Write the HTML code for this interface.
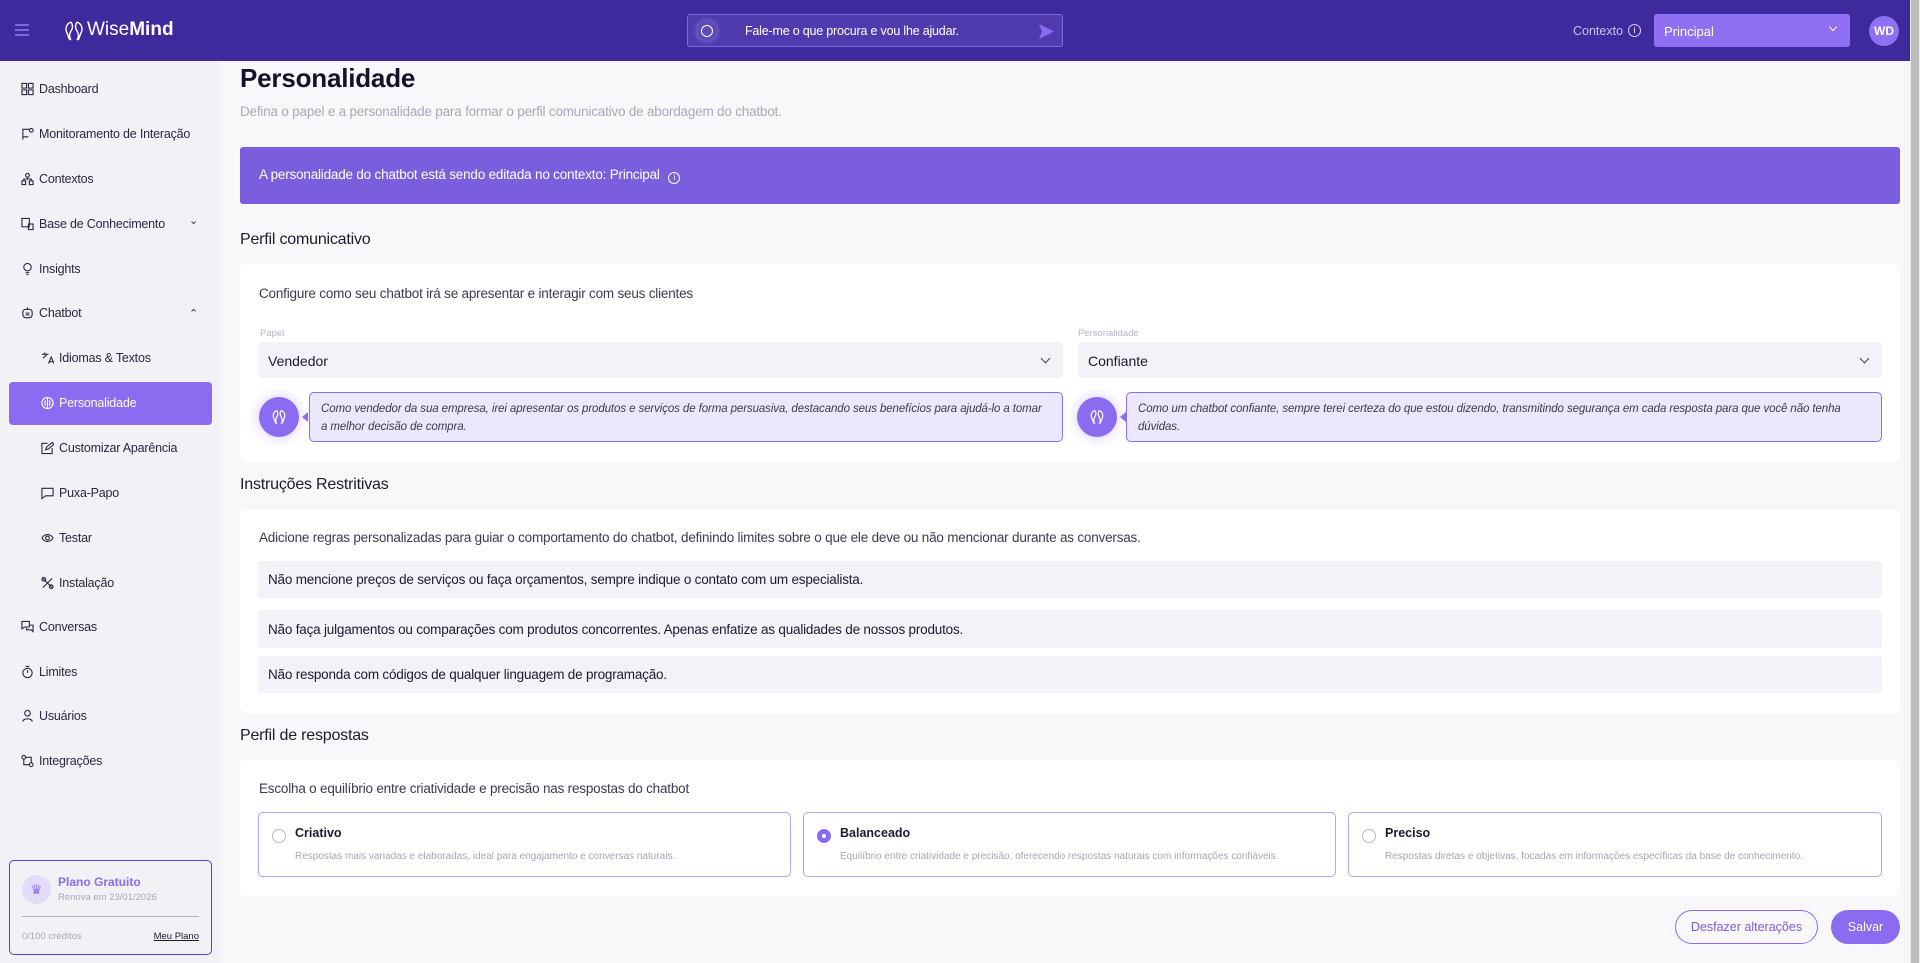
<!DOCTYPE html>
<html><head><meta charset="utf-8"><style>
*{box-sizing:border-box;margin:0;padding:0}
body{width:1920px;height:963px;overflow:hidden;font-family:"Liberation Sans",sans-serif;background:#f8f8fa;color:#1c1b2e;position:relative;font-size:13px}
.hdr{position:absolute;left:0;top:0;width:1910px;height:61px;background:#3e2a9d}
.scroll{position:absolute;right:0;top:0;width:10px;height:963px;background:#e8e8e8}
.scroll div{position:absolute;left:1px;top:0;width:8px;height:963px;background:#bdbdbd}
.side{position:absolute;left:0;top:61px;width:220px;height:902px;background:#f1f1f6}
.nav{position:absolute;left:39px;font-size:12.5px;color:#2a2940;letter-spacing:-0.2px}
.nav svg{position:absolute;left:-18px;top:0;width:13px;height:14px;fill:none;stroke:#2a2940;stroke-width:1.2}
.sub{left:59px}
.card{position:absolute;left:240px;width:1660px;background:#fff;border-radius:6px}
.h2{position:absolute;left:240px;font-size:16px;color:#1c1b2e;letter-spacing:-0.2px}
.sel{position:absolute;background:#f2f2f8;border-radius:4px;height:36px;font-size:14px;padding:11px 10px;color:#1c1b2e}
.sel:after{content:"";position:absolute;right:14px;top:13px;width:6px;height:6px;border-right:1.3px solid #444;border-bottom:1.3px solid #444;transform:rotate(45deg)}
.bub{position:absolute;background:#ece8fc;border:1px solid #8b6cf0;border-radius:5px;font-style:italic;font-size:11.5px;color:#3b3a50;padding:7px 11px;line-height:18px;letter-spacing:-0.1px}
.av{position:absolute;width:40px;height:40px;border-radius:50%;background:#8b6cf0;box-shadow:0 0 10px 3px #e6defd}
.av svg{position:absolute;left:12px;top:12px}
.rule{position:absolute;left:258px;width:1624px;background:#f2f2f8;border-radius:3px;font-size:13.5px;padding-left:10px;display:flex;align-items:center;letter-spacing:-0.2px}
.opt{position:absolute;top:812px;height:65px;border:1px solid #b3a2f3;border-radius:5px;background:#fff}
.opt b{position:absolute;left:36px;top:13px;font-size:12.5px;font-weight:bold;color:#1c1b2e}
.opt span{position:absolute;left:36px;top:38px;font-size:10px;color:#a6a5b8}
.opt i{position:absolute;left:13px;top:16px;width:14px;height:14px;border-radius:50%;border:1px solid #b9b3d6}
.sub2{letter-spacing:-0.2px}
</style></head><body>
<div class="hdr">
 <div style="position:absolute;left:15px;top:24px;width:14px;height:2px;background:#7c6bd9;box-shadow:0 5px 0 #7c6bd9,0 10px 0 #7c6bd9"></div>
 <svg style="position:absolute;left:63px;top:20px" width="22" height="22" viewBox="0 0 22 22" fill="none" stroke="#fff" stroke-width="1.4"><path d="M8 2C3 4 2 9 4 13s1 6 4 7M14 2c5 2 6 7 4 11s-1 6-4 7M8 2c2 3 2 6 0 9s-2 6 0 9M14 2c-2 3-2 6 0 9s2 6 0 9"/></svg>
 <div style="position:absolute;left:87px;top:19px;color:#fff;font-size:19px"><span style="font-weight:300">Wise</span><b>Mind</b></div>
 <div style="position:absolute;left:687px;top:14px;width:376px;height:33px;border:1px solid #7d68e0;border-radius:3px;background:#4f3bad">
  <div style="position:absolute;left:9px;top:6px;width:20px;height:20px;border-radius:50%;background:#5e4bb8;box-shadow:0 0 6px #8f7fe0"><div style="position:absolute;left:4px;top:4px;width:12px;height:12px;border:1.5px solid #fff;border-radius:50%"></div></div>
  <div style="position:absolute;left:57px;top:9px;color:#fff;font-size:12.5px;letter-spacing:-0.2px">Fale-me o que procura e vou lhe ajudar.</div>
  <svg style="position:absolute;right:7px;top:8px" width="17" height="17" viewBox="0 0 17 17"><path d="M1 1L16 8.5 1 16 4 8.5z" fill="#8b6cf0"/></svg>
 </div>
 <div style="position:absolute;left:1573px;top:24px;color:#c9c2f0;font-size:12.5px">Contexto</div>
 <div style="position:absolute;left:1628px;top:24px;width:13px;height:13px;border-radius:50%;border:1.3px solid #d8d1ff;color:#fff;font-size:9px;text-align:center;line-height:11px">i</div>
 <div style="position:absolute;left:1654px;top:14px;width:196px;height:33px;background:#8f6ff2;border-radius:3px;color:#fff;font-size:13px;padding:10px 10px">Principal<span style="position:absolute;right:14px;top:10px;width:6px;height:6px;border-right:1.3px solid #fff;border-bottom:1.3px solid #fff;transform:rotate(45deg)"></span></div>
 <div style="position:absolute;left:1869px;top:16px;width:30px;height:30px;border-radius:50%;background:#8f6ff2;color:#fff;font-size:12px;font-weight:bold;text-align:center;line-height:30px">WD</div>
</div>
<div class="scroll"><div></div></div>
<div class="side">
 <div style="position:absolute;left:9px;top:321px;width:203px;height:43px;background:#8b6cf0;border-radius:4px"></div>
 <div style="position:absolute;left:9px;top:799px;width:203px;height:95px;border:1.3px solid #5b3fd0;border-radius:5px;background:#f1f1f6">
  <div style="position:absolute;left:12px;top:14px;width:29px;height:29px;border-radius:50%;background:#e3dcfb;color:#8b6cf0;text-align:center;line-height:29px;font-size:13px">♛</div>
  <div style="position:absolute;left:48px;top:14px;color:#8b6cf0;font-weight:bold;font-size:12px">Plano Gratuito</div>
  <div style="position:absolute;left:48px;top:31px;color:#a9a8bb;font-size:9.5px">Renova em 23/01/2026</div>
  <div style="position:absolute;left:12px;top:55px;width:177px;height:1px;background:#b0aec4"></div>
  <div style="position:absolute;left:12px;top:70px;color:#a9a8bb;font-size:9.5px">0/100 créditos</div>
  <div style="position:absolute;right:12px;top:70px;color:#1c1b2e;font-size:9.5px;text-decoration:underline">Meu Plano</div>
 </div>
</div>
<div class="nav" style="top:82px"><svg viewBox="0 0 14 14"><rect x="1" y="1" width="5" height="5"/><rect x="8" y="1" width="5" height="5"/><rect x="1" y="8" width="5" height="5"/><rect x="8" y="8" width="5" height="5"/></svg>Dashboard</div>
<div class="nav" style="top:127px"><svg viewBox="0 0 14 14"><path d="M2 13V2h7M2 10h6"/><circle cx="11" cy="3" r="2"/></svg>Monitoramento de Interação</div>
<div class="nav" style="top:172px"><svg viewBox="0 0 14 14"><circle cx="7" cy="3" r="2"/><rect x="1" y="9" width="4" height="4"/><rect x="9" y="9" width="4" height="4"/><path d="M7 5v2M3 9V7h8v2"/></svg>Contextos</div>
<div class="nav" style="top:217px"><svg viewBox="0 0 14 14"><rect x="1" y="1" width="8" height="9"/><rect x="8" y="7" width="5" height="6"/></svg>Base de Conhecimento<span style="position:absolute;left:150px;top:-3px;font-size:11px">⌄</span></div>
<div class="nav" style="top:262px"><svg viewBox="0 0 14 14"><circle cx="7" cy="5" r="4"/><path d="M5 11h4M6 13h2"/></svg>Insights</div>
<div class="nav" style="top:306px"><svg viewBox="0 0 14 14"><rect x="2" y="3" width="10" height="9" rx="3"/><path d="M5 7h4M5 9h4M7 1v2"/></svg>Chatbot<span style="position:absolute;left:150px;top:1px;font-size:11px">⌃</span></div>
<div class="nav sub" style="top:351px"><svg viewBox="0 0 14 14"><path d="M1 3h7M4 1v2M2 7c2-1 4-3 4-4M8 13l3-7 3 7M9 11h4"/></svg>Idiomas &amp; Textos</div>
<div class="nav sub" style="top:396px;color:#fff"><svg viewBox="0 0 14 14" style="stroke:#fff"><circle cx="7" cy="7" r="6"/><path d="M7 1v12M5 4c-1 2-1 4 0 6M9 4c1 2 1 4 0 6"/></svg>Personalidade</div>
<div class="nav sub" style="top:441px"><svg viewBox="0 0 14 14"><path d="M12 7v6H1V2h6M5 9l1-3 6-5 2 2-6 5z"/></svg>Customizar Aparência</div>
<div class="nav sub" style="top:486px"><svg viewBox="0 0 14 14"><path d="M1 2h12v8H5l-4 3z"/></svg>Puxa-Papo</div>
<div class="nav sub" style="top:531px"><svg viewBox="0 0 14 14"><path d="M1 7c3-5 9-5 12 0-3 5-9 5-12 0z"/><circle cx="7" cy="7" r="2"/></svg>Testar</div>
<div class="nav sub" style="top:576px"><svg viewBox="0 0 14 14"><path d="M2 2l10 10M12 2L2 12"/><circle cx="3" cy="3" r="2"/><circle cx="11" cy="11" r="2"/></svg>Instalação</div>
<div class="nav" style="top:620px"><svg viewBox="0 0 14 14"><path d="M1 1h8v6H4l-3 2zM10 5h3v7l-2-2H6V8"/></svg>Conversas</div>
<div class="nav" style="top:665px"><svg viewBox="0 0 14 14"><circle cx="7" cy="8" r="5"/><path d="M7 8V5M5 1h4"/></svg>Limites</div>
<div class="nav" style="top:709px"><svg viewBox="0 0 14 14"><circle cx="7" cy="4" r="3"/><path d="M2 13c0-4 10-4 10 0"/></svg>Usuários</div>
<div class="nav" style="top:754px"><svg viewBox="0 0 14 14"><circle cx="3" cy="3" r="2"/><circle cx="11" cy="11" r="2"/><path d="M5 3h6v6M9 11H3V5"/></svg>Integrações</div>

<div style="position:absolute;left:240px;top:63px;font-size:26px;font-weight:bold;color:#14132a;letter-spacing:-0.2px">Personalidade</div>
<div style="position:absolute;left:240px;top:104px;font-size:13.5px;color:#a9a8bb;letter-spacing:-0.2px">Defina o papel e a personalidade para formar o perfil comunicativo de abordagem do chatbot.</div>
<div style="position:absolute;left:240px;top:147px;width:1660px;height:57px;background:#7b5ede;border-radius:3px;color:#fff;font-size:13.5px;padding:20px 19px;letter-spacing:-0.2px">A personalidade do chatbot está sendo editada no contexto: Principal <span style="display:inline-block;width:12px;height:12px;border:1.2px solid #fff;border-radius:50%;font-size:8px;text-align:center;line-height:10px;margin-left:5px;vertical-align:-1px">i</span></div>

<div class="h2" style="top:231px">Perfil comunicativo</div>
<div class="card" style="top:264px;height:198px"></div>
<div class="sub2" style="position:absolute;left:259px;top:286px;font-size:13.5px;color:#3b3a50">Configure como seu chatbot irá se apresentar e interagir com seus clientes</div>
<div style="position:absolute;left:260px;top:328px;font-size:9.5px;color:#b5b4c6">Papel</div>
<div style="position:absolute;left:1078px;top:328px;font-size:9.5px;color:#b5b4c6">Personalidade</div>
<div class="sel" style="left:258px;top:342px;width:805px">Vendedor</div>
<div class="sel" style="left:1078px;top:342px;width:804px">Confiante</div>
<div class="av" style="left:259px;top:397px"><svg width="16" height="16" viewBox="0 0 22 22" fill="none" stroke="#fff" stroke-width="1.6"><path d="M8 2C3 4 2 9 4 13s1 6 4 7M14 2c5 2 6 7 4 11s-1 6-4 7M8 2c2 3 2 6 0 9s-2 6 0 9M14 2c-2 3-2 6 0 9s2 6 0 9"/></svg></div>
<div class="av" style="left:1077px;top:397px"><svg width="16" height="16" viewBox="0 0 22 22" fill="none" stroke="#fff" stroke-width="1.6"><path d="M8 2C3 4 2 9 4 13s1 6 4 7M14 2c5 2 6 7 4 11s-1 6-4 7M8 2c2 3 2 6 0 9s-2 6 0 9M14 2c-2 3-2 6 0 9s2 6 0 9"/></svg></div>
<div style="position:absolute;left:302px;top:412px;width:0;height:0;border:5px solid transparent;border-right:6px solid #8b6cf0;border-left:0"></div>
<div style="position:absolute;left:1120px;top:412px;width:0;height:0;border:5px solid transparent;border-right:6px solid #8b6cf0;border-left:0"></div>
<div class="bub" style="left:309px;top:392px;width:754px;height:50px">Como vendedor da sua empresa, irei apresentar os produtos e serviços de forma persuasiva, destacando seus benefícios para ajudá-lo a tomar a melhor decisão de compra.</div>
<div class="bub" style="left:1126px;top:392px;width:756px;height:50px">Como um chatbot confiante, sempre terei certeza do que estou dizendo, transmitindo segurança em cada resposta para que você não tenha dúvidas.</div>

<div class="h2" style="top:476px">Instruções Restritivas</div>
<div class="card" style="top:509px;height:204px"></div>
<div class="sub2" style="position:absolute;left:259px;top:530px;font-size:13.5px;color:#3b3a50">Adicione regras personalizadas para guiar o comportamento do chatbot, definindo limites sobre o que ele deve ou não mencionar durante as conversas.</div>
<div class="rule" style="top:561px;height:37px">Não mencione preços de serviços ou faça orçamentos, sempre indique o contato com um especialista.</div>
<div class="rule" style="top:610px;height:38px">Não faça julgamentos ou comparações com produtos concorrentes. Apenas enfatize as qualidades de nossos produtos.</div>
<div class="rule" style="top:656px;height:37px">Não responda com códigos de qualquer linguagem de programação.</div>

<div class="h2" style="top:727px">Perfil de respostas</div>
<div class="card" style="top:760px;height:136px"></div>
<div class="sub2" style="position:absolute;left:259px;top:781px;font-size:13.5px;color:#3b3a50">Escolha o equilíbrio entre criatividade e precisão nas respostas do chatbot</div>
<div class="opt" style="left:258px;width:533px"><i></i><b>Criativo</b><span>Respostas mais variadas e elaboradas, ideal para engajamento e conversas naturais.</span></div>
<div class="opt" style="left:803px;width:533px"><i style="background:#8b6cf0;border-color:#8b6cf0"><em style="position:absolute;left:4px;top:4px;width:4px;height:4px;background:#fff;border-radius:50%"></em></i><b>Balanceado</b><span>Equilíbrio entre criatividade e precisão, oferecendo respostas naturais com informações confiáveis.</span></div>
<div class="opt" style="left:1348px;width:534px"><i></i><b>Preciso</b><span>Respostas diretas e objetivas, focadas em informações específicas da base de conhecimento.</span></div>

<div style="position:absolute;left:1675px;top:910px;width:143px;height:34px;border:1px solid #8b6cf0;border-radius:17px;color:#7b5ede;font-size:12.5px;text-align:center;line-height:32px">Desfazer alterações</div>
<div style="position:absolute;left:1831px;top:910px;width:69px;height:34px;background:#8b6cf0;border-radius:17px;color:#fff;font-size:12.5px;text-align:center;line-height:34px">Salvar</div>
</body></html>
